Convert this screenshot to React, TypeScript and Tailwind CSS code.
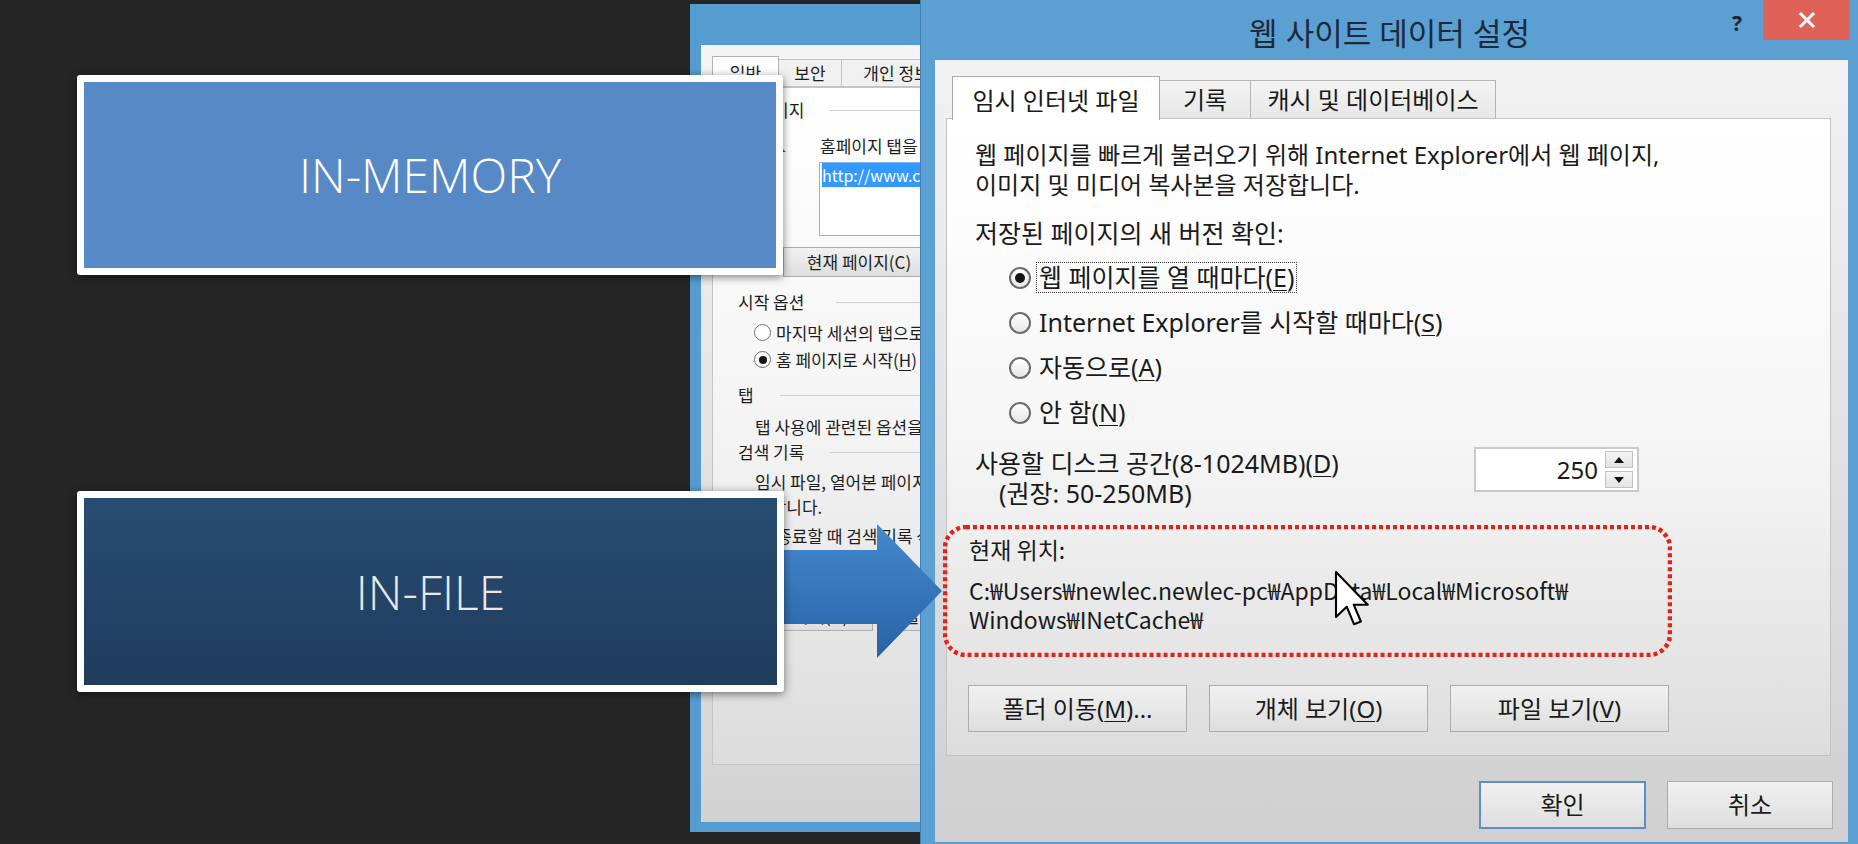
import React from "react";

const U = ({ children }: { children: React.ReactNode }) => (
  <span className="underline decoration-1 underline-offset-[3px]">{children}</span>
);

function Radio({ checked }: { checked?: boolean }) {
  return (
    <span className="flex h-[22px] w-[22px] shrink-0 items-center justify-center rounded-full border-2 border-[#6a6a6a] bg-linear-to-b from-white to-[#e6e6e6]">
      {checked && <span className="h-[10px] w-[10px] rounded-full bg-[#151515]" />}
    </span>
  );
}

function SmallRadio({ checked }: { checked?: boolean }) {
  return (
    <span className="flex h-[17px] w-[17px] shrink-0 items-center justify-center rounded-full border border-[#707070] bg-white">
      {checked && <span className="h-[8px] w-[8px] rounded-full bg-[#151515]" />}
    </span>
  );
}

function WinButton({ children, className }: { children: React.ReactNode; className: string }) {
  return (
    <div
      className={`flex items-center justify-center border bg-linear-to-b from-[#f1f1f1] to-[#dedede] ${className}`}
    >
      {children}
    </div>
  );
}

function BackDialog() {
  return (
    <div className="absolute left-[690px] top-[4px] z-0 h-[828px] w-[300px] overflow-hidden bg-[#559dd1] pb-[10px] pl-[11px] pt-[41px]">
      <div className="h-full w-[420px] bg-linear-to-b from-[#f4f4f4] to-[#d3d3d3] pl-[11px] pt-[11px] font-['Noto_Sans_CJK_KR',sans-serif] text-[17px] text-[#1e1e1e]">
        <div className="flex h-[31px] items-end">
          <div className="relative z-10 -mb-px flex h-[32px] w-[67px] items-center justify-center border border-b-0 border-[#b3b3b3] bg-white">
            일반
          </div>
          <div className="flex h-[28px] w-[63px] items-center justify-center border border-l-0 border-[#c2c2c2] bg-[#f0f0f0]">
            보안
          </div>
          <div className="flex h-[28px] w-[110px] items-center justify-center border border-l-0 border-[#c2c2c2] bg-[#f0f0f0]">
            개인 정보
          </div>
        </div>
        <div className="h-[678px] whitespace-nowrap border border-[#c4c4c4] bg-linear-to-b from-white via-[#f4f4f4] to-[#dcdcdc] pl-[25px]">
          <div className="mt-[11px] flex h-[22px] items-center">
            <span>홈 페이지</span>
            <span className="ml-[26px] h-px flex-1 bg-[#cfcfcf]" />
          </div>
          <div className="mt-[14px] flex h-[22px] items-start">
            <svg className="ml-[22px] mt-[2px] shrink-0" width="30" height="30" viewBox="0 0 30 30">
              <path d="M4 15 L15 5 L26 15 Z" fill="#2f4fa8" />
              <rect x="8" y="15" width="14" height="12" fill="#9aa7b8" />
              <rect x="13" y="19" width="5" height="8" fill="#5b6b80" />
            </svg>
            <span className="ml-[30px] leading-[22px]">홈페이지 탭을 만들려면 각 주소를 한 줄에 입력하십시오(R).</span>
          </div>
          <div className="ml-[81px] mt-[5px] h-[74px] w-[300px] border border-[#86b5e6] bg-white pl-[2px] pt-[3px] text-[16px] leading-[19px]">
            <span className="bg-[#3399ff] text-white">http://www.chosun.com/</span>
          </div>
          <div className="mt-[11px] flex h-[30px] gap-[10px] pl-[45px]">
            <WinButton className="w-[152px] border-[#adadad]">현재 페이지(C)</WinButton>
            <WinButton className="w-[130px] border-[#adadad]">기본값 사용(F)</WinButton>
          </div>
          <div className="mt-[14px] flex h-[22px] items-center">
            <span>시작 옵션</span>
            <span className="ml-[32px] h-px flex-1 bg-[#cfcfcf]" />
          </div>
          <div className="mt-[6px] flex h-[27px] items-center gap-[5px] pl-[16px]">
            <SmallRadio />
            <span>마지막 세션의 탭으로 시작(B)</span>
          </div>
          <div className="flex h-[27px] items-center gap-[5px] pl-[16px]">
            <SmallRadio checked />
            <span>
              홈 페이지로 시작(<U>H</U>)
            </span>
          </div>
          <div className="mt-[11px] flex h-[22px] items-center">
            <span>탭</span>
            <span className="ml-[26px] h-px flex-1 bg-[#cfcfcf]" />
          </div>
          <div className="mt-[10px] flex h-[22px] items-center pl-[17px]">
            탭 사용에 관련된 옵션을 변경합니다.
          </div>
          <div className="mt-[3px] flex h-[22px] items-center">
            <span>검색 기록</span>
            <span className="ml-[26px] h-px flex-1 bg-[#cfcfcf]" />
          </div>
          <div className="mt-[6px] pl-[17px] leading-[25px]">
            임시 파일, 열어본 페이지 목록, 쿠키, 저장된 암호 및 웹 양식 정보를 삭
            <br />
            제합니다.
          </div>
          <div className="mt-[6px] flex h-[22px] items-center gap-[6px] pl-[17px]">
            <span className="h-[15px] w-[15px] border border-[#707070] bg-white" />
            <span>종료할 때 검색 기록 삭제(W)</span>
          </div>
          <div className="mt-[54px] flex h-[30px] gap-[12px] pl-[45px]">
            <WinButton className="w-[90px] border-[#adadad]">삭제(D)...</WinButton>
            <WinButton className="w-[90px] border-[#adadad]">설정(S)</WinButton>
          </div>
        </div>
      </div>
    </div>
  );
}

function FrontDialog() {
  return (
    <div className="absolute left-[920px] top-0 z-0 flex h-[844px] w-[938px] flex-col border-l border-[#4580b0] bg-[#5b9fd3] font-['Noto_Sans','Noto_Sans_CJK_KR',sans-serif] text-[#1a1a1a]">
      <div className="grid h-[60px] shrink-0 grid-cols-[1fr_auto_1fr]">
        <div />
        <div className="pt-[12px] text-[31px] leading-[42px] text-[#1c2a3a]">웹 사이트 데이터 설정</div>
        <div className="flex items-start justify-end pr-[8px]">
          <span className="mr-[21px] mt-[8px] text-[21px] font-bold leading-[30px] text-[#1b2633]">?</span>
          <div className="flex h-[40px] w-[87px] items-center justify-center bg-[#dd6257]">
            <svg width="18" height="18" viewBox="0 0 18 18">
              <path d="M3 3 L15 15 M15 3 L3 15" stroke="white" strokeWidth="3" strokeLinecap="square" />
            </svg>
          </div>
        </div>
      </div>

      <div className="ml-[14px] mr-[10px] flex h-[782px] flex-col bg-linear-to-b from-[#f2f2f2] to-[#d0d0d0] px-[11px] pt-[16px] text-[24px]">
        <div className="ml-[6px] flex h-[43px] items-end">
          <div className="relative z-10 -mb-px flex h-[44px] w-[208px] items-center justify-center border border-b-0 border-[#a9a9a9] bg-white pt-[4px]">
            임시 인터넷 파일
          </div>
          <div className="flex h-[39px] w-[91px] items-center justify-center border border-l-0 border-[#b4b4b4] bg-linear-to-b from-[#f3f3f3] to-[#e8e8e8]">
            기록
          </div>
          <div className="flex h-[39px] w-[245px] items-center justify-center border border-l-0 border-[#b4b4b4] bg-linear-to-b from-[#f3f3f3] to-[#e8e8e8]">
            캐시 및 데이터베이스
          </div>
        </div>

        <div className="-mt-px h-[638px] w-[885px] whitespace-nowrap border border-[#c3c3c3] bg-linear-to-b from-white via-[#f6f6f6] to-[#dddddd] pl-[28px] pt-[21px]">
          <div className="leading-[30px]">
            웹 페이지를 빠르게 불러오기 위해 Internet Explorer에서 웹 페이지,
            <br />
            이미지 및 미디어 복사본을 저장합니다.
          </div>
          <div className="mt-[18px] text-[25px] leading-[30px]">저장된 페이지의 새 버전 확인:</div>

          <div className="mt-[7px] flex flex-col pl-[34px] text-[25px]">
            <div className="flex h-[45px] items-center gap-[5px]">
              <Radio checked />
              <span className="border border-dotted border-[#3a3a3a] px-[2px] leading-[29px]">
                웹 페이지를 열 때마다(<U>E</U>)
              </span>
            </div>
            <div className="flex h-[45px] items-center gap-[8px]">
              <Radio />
              <span>
                Internet Explorer를 시작할 때마다(<U>S</U>)
              </span>
            </div>
            <div className="flex h-[45px] items-center gap-[8px]">
              <Radio />
              <span>
                자동으로(<U>A</U>)
              </span>
            </div>
            <div className="flex h-[45px] items-center gap-[8px]">
              <Radio />
              <span>
                안 함(<U>N</U>)
              </span>
            </div>
          </div>

          <div className="mt-[13px] flex">
            <div className="w-[499px] text-[25px] leading-[30px]">
              사용할 디스크 공간(8-1024MB)(<U>D</U>)
              <div className="pl-[24px]">(권장: 50-250MB)</div>
            </div>
            <div className="-mt-px flex h-[45px] w-[165px] items-center border-2 border-[#c9c9c9] bg-white">
              <span className="flex-1 pr-[7px] text-right">250</span>
              <div className="flex flex-col gap-[3px] pr-[4px]">
                <div className="flex h-[17px] w-[28px] items-center justify-center border border-[#c2c2c2] bg-linear-to-b from-[#f5f5f5] to-[#e3e3e3]">
                  <svg width="10" height="6" viewBox="0 0 10 6">
                    <path d="M0 6 L5 0 L10 6 Z" fill="#111" />
                  </svg>
                </div>
                <div className="flex h-[17px] w-[28px] items-center justify-center border border-[#c2c2c2] bg-linear-to-b from-[#f5f5f5] to-[#e3e3e3]">
                  <svg width="10" height="6" viewBox="0 0 10 6">
                    <path d="M0 0 L10 0 L5 6 Z" fill="#111" />
                  </svg>
                </div>
              </div>
            </div>
          </div>

          <div className="relative -ml-[32px] mt-[17px] h-[132px] w-[729px] pl-[26px] pt-[9px] font-['Noto_Sans_CJK_KR',sans-serif] text-[23px]">
            <svg className="absolute left-0 top-0" width="729" height="132" viewBox="0 0 729 132">
              <rect
                x="2"
                y="2"
                width="725"
                height="128"
                rx="21"
                fill="none"
                stroke="#e3231a"
                strokeWidth="4.5"
                strokeDasharray="4 3"
              />
            </svg>
            <div className="leading-[30px]">현재 위치:</div>
            <div className="mt-[12px] leading-[29px]">
              C:₩Users₩newlec.newlec-pc₩AppData₩Local₩Microsoft₩
              <br />
              Windows₩INetCache₩
            </div>
          </div>

          <div className="-ml-[7px] mt-[28px] flex gap-[22px]">
            <WinButton className="h-[47px] w-[219px] border-[#acacac]">
              <span>
                폴더 이동(<U>M</U>)...
              </span>
            </WinButton>
            <WinButton className="h-[47px] w-[219px] border-[#acacac]">
              <span>
                개체 보기(<U>O</U>)
              </span>
            </WinButton>
            <WinButton className="h-[47px] w-[219px] border-[#acacac]">
              <span>
                파일 보기(<U>V</U>)
              </span>
            </WinButton>
          </div>
        </div>

        <div className="mt-[25px] flex justify-end gap-[21px] pr-[4px]">
          <WinButton className="h-[48px] w-[167px] border-2 border-[#5b8fc6]">확인</WinButton>
          <WinButton className="h-[48px] w-[166px] border-[#acacac]">취소</WinButton>
        </div>
      </div>
    </div>
  );
}

export default function App() {
  return (
    <div className="relative h-[844px] w-[1858px] overflow-hidden bg-[#252525]">
      <BackDialog />
      <FrontDialog />

      {/* pointer cursor over the path */}
      <svg className="absolute left-[1333px] top-[569px]" width="39" height="60" viewBox="0 0 13 20">
        <path
          d="M1 1 L1 16 L4.6 12.6 L7 18.4 L9.3 17.5 L6.9 11.9 L11.6 11.9 Z"
          fill="white"
          stroke="black"
          strokeWidth="0.7"
          strokeLinejoin="round"
        />
      </svg>

      {/* slide arrow */}
      <svg className="absolute left-[770px] top-[520px]" width="176" height="142" viewBox="0 0 176 142">
        <defs>
          <linearGradient id="arrowFill" x1="0" y1="0" x2="0" y2="1">
            <stop offset="0" stopColor="#4589ce" />
            <stop offset="1" stopColor="#2862a6" />
          </linearGradient>
        </defs>
        <path d="M0 30 L107 30 L107 4 L172 71 L107 138 L107 104 L0 104 Z" fill="url(#arrowFill)" />
      </svg>

      <div className="absolute left-[77px] top-[75px] h-[200px] w-[706px] rounded-[3px] bg-white p-[7px] shadow-[0_2px_8px_rgba(0,0,0,0.5)]">
        <div className="flex h-full items-center justify-center bg-[#5689c5] font-['Open_Sans',sans-serif] text-[48px] font-light text-white">
          IN-MEMORY
        </div>
      </div>

      <div className="absolute left-[77px] top-[491px] h-[201px] w-[707px] rounded-[3px] bg-white p-[7px] shadow-[0_2px_8px_rgba(0,0,0,0.5)]">
        <div className="flex h-full items-center justify-center bg-linear-to-b from-[#284c73] to-[#1f3c5d] font-['Open_Sans',sans-serif] text-[48px] font-light text-[#e8e8e8]">
          IN-FILE
        </div>
      </div>
    </div>
  );
}
